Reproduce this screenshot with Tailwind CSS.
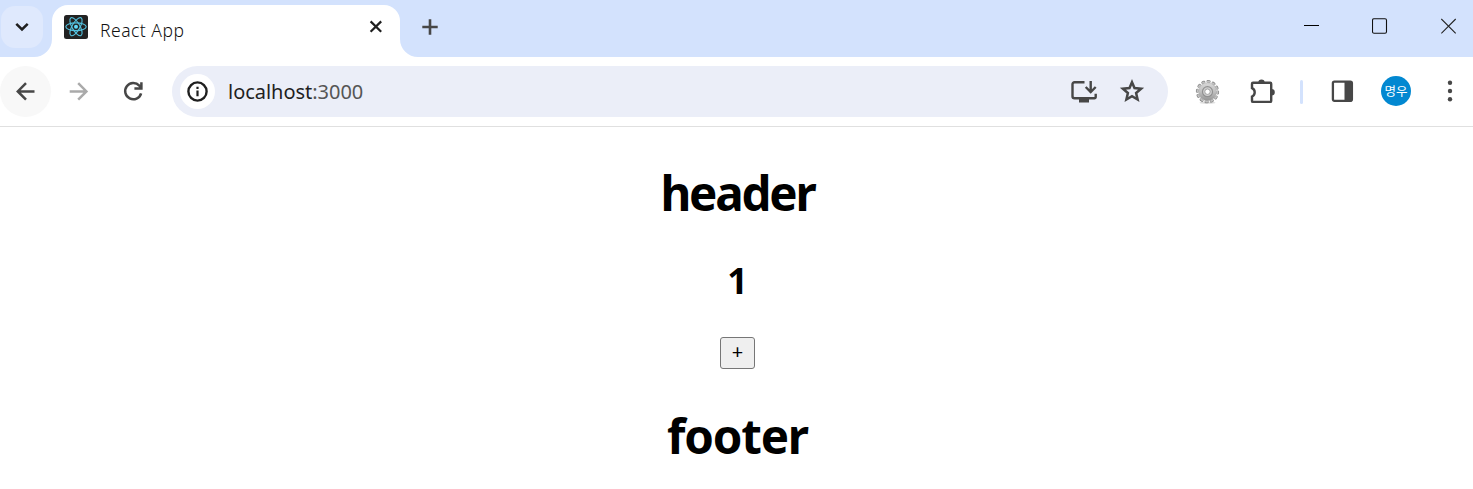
<!DOCTYPE html>
<html lang="ko">
<head>
<meta charset="utf-8">
<title>React App</title>
<script src="https://cdn.jsdelivr.net/npm/@tailwindcss/browser@4"></script>
</head>
<body class="w-[1473px] h-[489px] overflow-hidden bg-white font-['Noto_Sans','Noto_Sans_CJK_KR',sans-serif] text-black">
<header class="h-[57px] bg-[#d3e2fd] flex items-start">
  <button class="ml-px mt-1.5 size-[42px] rounded-[14px] bg-[#dfe9fd] grid place-items-center shrink-0">
    <svg class="size-[42px]" viewBox="0 0 42 42" fill="none" stroke="#1f1f1f" stroke-width="2.5"><path d="M15.3 17.8l5.7 5.7 5.7-5.7"/></svg>
  </button>
  <svg class="self-end -ml-[9px] w-[18px] h-[18px] shrink-0" viewBox="0 0 18 18"><path d="M18 0A18 18 0 0 1 0 18H18z" fill="#fff"/></svg>
  <div class="mt-[5px] w-[348px] h-[52px] bg-white rounded-t-2xl flex items-start pl-3 shrink-0">
    <svg class="mt-[10px] size-6 shrink-0" viewBox="0 0 24 24"><rect width="24" height="24" rx="2.5" fill="#222"/><g fill="none" stroke="#53c1de" stroke-width="1.15"><ellipse cx="12" cy="11.7" rx="10.2" ry="3.9"/><ellipse cx="12" cy="11.7" rx="10.2" ry="3.9" transform="rotate(60 12 11.7)"/><ellipse cx="12" cy="11.7" rx="10.2" ry="3.9" transform="rotate(120 12 11.7)"/></g><circle cx="12" cy="11.7" r="2" fill="#61dafb"/></svg>
    <span class="ml-3 mt-3 text-[17.5px] leading-[26px] font-light tracking-[0.5px] text-[#111] whitespace-nowrap">React App</span>
    <svg class="ml-auto mr-3 mt-[9px] size-6 shrink-0" viewBox="0 0 24 24" stroke="#1f1f1f" stroke-width="2.2"><path d="M6.6 7.4l10.6 10.4M17.2 7.4L6.6 17.8"/></svg>
  </div>
  <svg class="self-end w-[18px] h-[18px] shrink-0" viewBox="0 0 18 18"><path d="M0 0A18 18 0 0 0 18 18H0z" fill="#fff"/></svg>
  <svg class="mt-[15px] size-6 shrink-0" viewBox="0 0 24 24" stroke="#474747" stroke-width="2.6"><path d="M4.3 12h15.4M12 4.3v15.4"/></svg>
  <div class="ml-auto mr-4 mt-[18px] flex gap-[53px]">
    <svg class="w-4 h-4" viewBox="0 0 16 16" stroke="#000" stroke-width="1"><path d="M1 7.5h15"/></svg>
    <svg class="w-4 h-4" viewBox="0 0 16 16" fill="none" stroke="#111"><rect x=".5" y=".8" width="14" height="14.4" rx="1.5" stroke-width="1.1"/></svg>
    <svg class="w-4 h-4" viewBox="0 0 16 16" stroke="#222" stroke-width="1.1"><path d="M.3 1l14.4 14.4M14.7 1L.3 15.4"/></svg>
  </div>
</header>
<nav class="h-[70px] border-b border-[#e0e0e0] flex items-center">
  <div class="size-[51px] rounded-full bg-[#f8f8f8] grid place-items-center shrink-0">
    <svg class="size-6" viewBox="0 0 24 24" fill="none" stroke="#474747" stroke-width="2.5"><path d="M20.5 11.4H4.2M12 3.2l-8.2 8.2 8.2 8.2"/></svg>
  </div>
  <svg class="ml-4 size-6 shrink-0" viewBox="0 0 24 24" fill="none" stroke="#aaa" stroke-width="2.5"><path d="M2.7 11.4h16.5M11.2 3.2l8.2 8.2-8.2 8.2"/></svg>
  <svg class="ml-[30px] size-6 shrink-0" viewBox="0 0 24 24" fill="none" stroke="#474747" stroke-width="2.5"><path d="M20.1 13.3A8.1 8.1 0 1 1 18.3 5.7l2.2 2.3M20.4 2.3v6.3h-7"/></svg>
  <div class="ml-[27px] w-[996px] h-[51px] rounded-full bg-[#ebeef8] flex items-center pl-2 shrink-0">
    <div class="size-[35px] rounded-full bg-white grid place-items-center">
      <svg class="size-[23px]" viewBox="0 0 23 23"><circle cx="11.5" cy="11.5" r="9.1" fill="none" stroke="#1f1f1f" stroke-width="2.4"/><path d="M10.4 10.5h2.2v5.7h-2.2zM10.4 6.8h2.2V9h-2.2z" fill="#1f1f1f"/></svg>
    </div>
    <span class="ml-[13px] text-[20px] leading-[28px] tracking-[-0.03px] text-[#1f1f1f]">localhost<span class="text-[#555]">:3000</span></span>
    <svg class="ml-auto w-[28px] h-7" viewBox="0 0 28 28" fill="none" stroke="#474747" stroke-width="2.4"><path d="M14.5 4.2H4.500a2 2 0 0 0-2 2v12a2 2 0 0 0 2 2h20a1.200 1.200 0 0 0 1.200-1.200v-3.300"/><path d="M9 20h10v4.500H9z" fill="#474747" stroke="none"/><path d="M20.700 3v10.500M15.700 9l5 5 5-5"/></svg>
    <svg class="ml-5 mr-[22px] w-7 h-7" viewBox="0 0 28 28" fill="none" stroke="#474747" stroke-width="2.500"><path d="M14 4.200l2.500 5.900 6.600.6-5 4.300 1.500 6.500L14 18.100l-5.600 3.400 1.500-6.500-5-4.300 6.600-.6z"/></svg>
  </div>
  <svg class="ml-[27px] size-[26px] shrink-0" viewBox="0 0 26 26">
    <defs><linearGradient id="metal" x1="0" y1="0" x2="0" y2="1"><stop stop-color="#d8d8d8"/><stop offset=".5" stop-color="#c0c0c0"/><stop offset="1" stop-color="#949494"/></linearGradient></defs>
    <ellipse cx="12.500" cy="23.800" rx="8" ry="1" fill="#ddd"/>
    <circle cx="12.500" cy="12.700" r="10.300" fill="none" stroke="#858585" stroke-width="2.600" stroke-linecap="round" stroke-dasharray="1.600 3.793"/>
    <circle cx="12.500" cy="12.700" r="10" fill="none" stroke="#c2c2c2" stroke-width="1.700" stroke-linecap="round" stroke-dasharray="1.500 3.736"/>
    <circle cx="12.500" cy="12.700" r="9" fill="url(#metal)" stroke="#a0a0a0" stroke-width=".5"/>
    <circle cx="12.500" cy="12.700" r="5" fill="#cfcfcf" stroke="#919191" stroke-width="1.200"/>
    <circle cx="12.500" cy="12.700" r="2.700" fill="#fff" stroke="#909090" stroke-width=".8"/>
  </svg>
  <svg class="ml-[27px] mr-0.5 size-7 shrink-0" viewBox="0 0 28 28"><path d="M5 4.700h17.200a1 1 0 0 1 1 1v17.200a1 1 0 0 1-1 1H5a1 1 0 0 1-1-1v-4.400c1.900-.8 2.700-2.300 2.700-4.200S5.900 10.900 4 10.100V5.700a1 1 0 0 1 1-1z" fill="none" stroke="#474747" stroke-width="2.400"/><path d="M10.300 4.700a3.200 3.200 0 0 1 6.400 0zM23.500 11a3.300 3.300 0 0 1 0 6.600z" fill="#474747"/></svg>
  <div class="ml-[22px] w-[3px] h-6 rounded-full bg-[#d3e2fd] shrink-0"></div>
  <svg class="ml-7 w-[23px] h-[23px] shrink-0" viewBox="0 0 23 23"><rect x="1.900" y="1.600" width="19" height="19.200" rx="1.500" fill="none" stroke="#474747" stroke-width="2.300"/><path d="M13.500 1h7.500v20.500h-7.500z" fill="#474747"/></svg>
  <div class="-mt-px ml-[27px] size-[30px] rounded-full bg-[#0288d1] text-white text-[12.5px] leading-[29px] text-center whitespace-nowrap font-['Noto_Sans_CJK_KR',sans-serif] shrink-0">명우</div>
  <svg class="-mt-px ml-[27px] size-6 shrink-0" viewBox="0 0 24 24" fill="#474747"><circle cx="12" cy="3.800" r="2.200"/><circle cx="12" cy="12" r="2.200"/><circle cx="12" cy="20.200" r="2.200"/></svg>
</nav>
<main class="flex flex-col items-center pl-[2px]">
  <h1 class="mt-[34px] text-[47.5px] leading-[64px] font-bold tracking-[-2.2px]">header</h1>
  <h2 class="mt-8 text-[36px] leading-[48px] font-bold">1</h2>
  <button class="mt-8 w-[35px] h-8 rounded-[3px] border border-[#767676] bg-[#efefef] text-[20px] leading-[26px] pb-0.5">+</button>
  <h1 class="mt-[35px] text-[47.5px] leading-[64px] font-bold tracking-[-1.2px]">footer</h1>
</main>
</body>
</html>
